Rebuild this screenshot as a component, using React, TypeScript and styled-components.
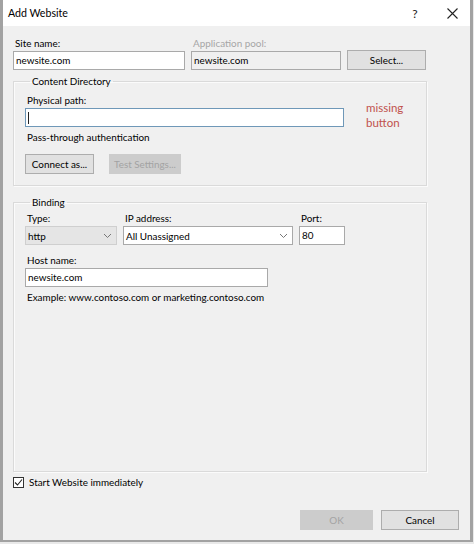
import React from "react";
import styled, { createGlobalStyle } from "styled-components";

const Global = createGlobalStyle`
  html, body { margin: 0; padding: 0; background: #e9e9e9; }
  body { width: 474px; height: 544px; overflow: hidden; }
  * { box-sizing: border-box; }
`;

const FONT = `Lato, "Noto Sans", sans-serif`;

const Window = styled.div`
  width: 473px;
  height: 542px;
  background: #f0f0f0;
  border-left: 3px solid #a2a2a2;
  border-right: 3px solid #a2a2a2;
  border-bottom: 2px solid #a2a2a2;
  display: flex;
  flex-direction: column;
  font-family: ${FONT};
  font-size: 9.9px;
  color: #000;
`;

const TitleBar = styled.div`
  height: 26px;
  background: #ffffff;
  display: flex;
  align-items: center;
  padding: 0 0 0 5px;
  font-size: 10.6px;
`;

const Title = styled.div`
  flex: 1;
  color: #000;
`;

const TitleButton = styled.div<{ $w: number; $mr?: number }>`
  width: ${(p) => p.$w}px;
  margin-right: ${(p) => p.$mr ?? 0}px;
  height: 26px;
  display: flex;
  align-items: center;
  justify-content: center;
  color: #222;
  font-size: 12px;
`;

const Body = styled.div`
  flex: 1;
  display: flex;
  flex-direction: column;
  padding: 9px 11px 10px 10px;
`;

const TopGrid = styled.div`
  display: grid;
  grid-template-columns: 172px 150px 79px;
  column-gap: 6px;
  align-items: end;
`;

const Field = styled.div<{ $mt?: number }>`
  display: flex;
  flex-direction: column;
  margin-top: ${(p) => p.$mt ?? 0}px;
`;

const Label = styled.div<{ $disabled?: boolean }>`
  height: 16px;
  line-height: 16px;
  padding-left: 2px;
  color: ${(p) => (p.$disabled ? "#a6a6a6" : "#000")};
  white-space: nowrap;
`;

const TextBox = styled.div<{ $w?: number; $readOnly?: boolean; $focus?: boolean }>`
  width: ${(p) => (p.$w ? `${p.$w}px` : "100%")};
  height: 19px;
  line-height: 17px;
  padding-left: 2px;
  background: ${(p) => (p.$readOnly ? "#f0f0f0" : "#ffffff")};
  border: 1px solid ${(p) => (p.$focus ? "#6f98b8" : "#a9a9a9")};
  color: #000;
  white-space: nowrap;
  display: flex;
  align-items: center;
`;

const Caret = styled.span`
  width: 1px;
  height: 12px;
  background: #222;
`;

const Button = styled.div<{ $w: number; $disabled?: boolean }>`
  width: ${(p) => p.$w}px;
  height: 20px;
  display: flex;
  align-items: center;
  justify-content: center;
  background: ${(p) => (p.$disabled ? "#cccccc" : "#e1e1e1")};
  border: 1px solid ${(p) => (p.$disabled ? "#cccccc" : "#adadad")};
  color: ${(p) => (p.$disabled ? "#a3a3a3" : "#000")};
  white-space: nowrap;
`;

const Group = styled.fieldset<{ $h: number; $mt: number }>`
  margin: ${(p) => p.$mt}px 0 0 0;
  padding: 0 11px 0 11px;
  width: 414px;
  height: ${(p) => p.$h}px;
  border: 1px solid #dadada;
  box-shadow: inset 1px 1px 0 #fbfbfb, 1px 1px 0 #fbfbfb;
  min-inline-size: 0;
`;

const Legend = styled.legend`
  margin-left: 5px;
  padding: 0 2px;
  line-height: 14px;
  color: #000;
`;

const PathRow = styled.div`
  display: flex;
  align-items: flex-end;
  margin-top: 4px;
`;

const Note = styled.div`
  margin-left: 22px;
  margin-bottom: -3px;
  color: #c0504d;
  font-size: 11.5px;
  line-height: 15px;
`;

const PlainText = styled.div<{ $mt: number }>`
  margin-top: ${(p) => p.$mt}px;
  padding-left: 2px;
  line-height: 16px;
  white-space: nowrap;
`;

const ButtonRow = styled.div<{ $gap: number; $mt: number; $end?: boolean }>`
  display: flex;
  gap: ${(p) => p.$gap}px;
  margin-top: ${(p) => p.$mt}px;
  justify-content: ${(p) => (p.$end ? "flex-end" : "flex-start")};
`;

const BindingRow = styled.div`
  display: flex;
  gap: 6px;
  margin-top: 1px;
`;

const Select = styled.div<{ $w: number; $gray?: boolean }>`
  width: ${(p) => p.$w}px;
  height: 19px;
  display: flex;
  align-items: center;
  padding: 0 4px 0 2px;
  background: ${(p) => (p.$gray ? "#e5e5e5" : "#ffffff")};
  border: 1px solid ${(p) => (p.$gray ? "#cfcfcf" : "#a9a9a9")};
  color: #000;
`;

const SelectText = styled.span`
  flex: 1;
  white-space: nowrap;
`;

const Chevron = () => (
  <svg width="9" height="6" viewBox="0 0 9 6">
    <path d="M1 1 L4.5 4.5 L8 1" fill="none" stroke="#777" strokeWidth="1" />
  </svg>
);

const CheckRow = styled.div`
  display: flex;
  align-items: center;
  gap: 5px;
  margin-top: 4px;
`;

const CheckBox = styled.div`
  width: 11px;
  height: 11px;
  border: 1px solid #333;
  background: #fff;
  display: flex;
  align-items: center;
  justify-content: center;
`;

const Spacer = styled.div`
  flex: 1;
`;

export default function App() {
  return (
    <>
      <Global />
      <Window>
        <TitleBar>
          <Title>Add Website</Title>
          <TitleButton $w={26} $mr={6}>?</TitleButton>
          <TitleButton $w={36}>
            <svg width="11" height="11" viewBox="0 0 11 11">
              <path d="M0.5 0.5 L10.5 10.5 M10.5 0.5 L0.5 10.5" stroke="#222" strokeWidth="1.1" />
            </svg>
          </TitleButton>
        </TitleBar>
        <Body>
          <TopGrid>
            <Field>
              <Label>Site name:</Label>
              <TextBox>newsite.com</TextBox>
            </Field>
            <Field>
              <Label $disabled>Application pool:</Label>
              <TextBox $readOnly>newsite.com</TextBox>
            </Field>
            <Button $w={79}>Select...</Button>
          </TopGrid>

          <Group $h={112} $mt={4}>
            <Legend>Content Directory</Legend>
            <PathRow>
              <Field>
                <Label>Physical path:</Label>
                <TextBox $w={319} $focus>
                  <Caret />
                </TextBox>
              </Field>
              <Note>
                missing
                <br />
                button
              </Note>
            </PathRow>
            <PlainText $mt={2}>Pass-through authentication</PlainText>
            <ButtonRow $gap={15} $mt={9}>
              <Button $w={69}>Connect as...</Button>
              <Button $w={72} $disabled>
                Test Settings...
              </Button>
            </ButtonRow>
          </Group>

          <Group $h={277} $mt={9}>
            <Legend>Binding</Legend>
            <BindingRow>
              <Field>
                <Label>Type:</Label>
                <Select $w={92} $gray>
                  <SelectText>http</SelectText>
                  <Chevron />
                </Select>
              </Field>
              <Field>
                <Label>IP address:</Label>
                <Select $w={170}>
                  <SelectText>All Unassigned</SelectText>
                  <Chevron />
                </Select>
              </Field>
              <Field>
                <Label>Port:</Label>
                <TextBox $w={46}>80</TextBox>
              </Field>
            </BindingRow>
            <Field $mt={7}>
              <Label>Host name:</Label>
              <TextBox $w={243}>newsite.com</TextBox>
            </Field>
            <PlainText $mt={2}>Example: www.contoso.com or marketing.contoso.com</PlainText>
          </Group>

          <CheckRow>
            <CheckBox>
              <svg width="9" height="9" viewBox="0 0 9 9">
                <path d="M1 4.5 L3.5 7 L8 1.5" fill="none" stroke="#222" strokeWidth="1.1" />
              </svg>
            </CheckBox>
            <span>Start Website immediately</span>
          </CheckRow>
          <Spacer />
          <ButtonRow $gap={8} $mt={0} $end>
            <Button $w={73} $disabled>
              OK
            </Button>
            <Button $w={78}>Cancel</Button>
          </ButtonRow>
        </Body>
      </Window>
    </>
  );
}
